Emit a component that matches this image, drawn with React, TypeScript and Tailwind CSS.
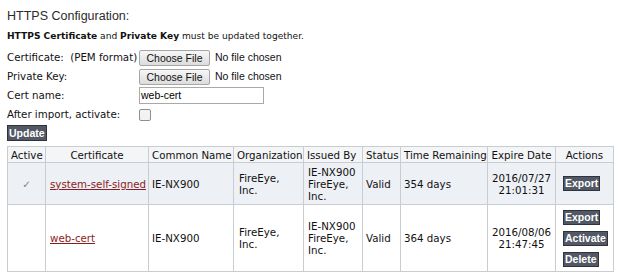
import React from "react";

const body = { fontFamily: '"DejaVu Sans", Verdana, sans-serif' };
const arial = { fontFamily: '"Liberation Sans", Arial, sans-serif' };

function DarkBtn({ children }: { children: React.ReactNode }) {
  return (
    <button
      type="button"
      style={arial}
      className="h-[15px] px-[1px] bg-[#525866] border border-[#2f333b] text-white font-bold text-[10.5px] leading-[13px] cursor-pointer"
    >
      {children}
    </button>
  );
}

function FileBtn() {
  return (
    <div className="flex items-center">
      <div
        style={arial}
        className="w-[71px] h-[16px] rounded-[2px] border border-[#a6a6a6] bg-gradient-to-b from-[#f7f7f7] to-[#dcdcdc] text-[10.5px] leading-[14px] text-[#111] flex items-center justify-center"
      >
        Choose File
      </div>
      <span style={arial} className="ml-[5px] text-[10.5px] text-[#111]">
        No file chosen
      </span>
    </div>
  );
}

export default function App() {
  const th = "border border-[#c9cdd2] font-normal text-[#111] px-[3px] h-[16px] leading-[12px] whitespace-nowrap";
  const td = "border border-[#c9cdd2] text-[#111] leading-[12px] align-middle";
  return (
    <div className="w-[620px] h-[278px] bg-white pt-[8px] px-[7px] overflow-hidden text-[#111]" style={body}>
      <div style={arial} className="h-[17px] text-[12.5px] leading-[17px] text-[#2b2b2b]">
        HTTPS Configuration:
      </div>
      <div className="mt-[4px] h-[14px] text-[9.1px] leading-[14px]">
        <b>HTTPS Certificate</b> and <b>Private Key</b> must be updated together.
      </div>
      <div className="mt-[5px] flex flex-col text-[10.25px]">
        <div className="h-[19px] flex items-center">
          <div className="w-[132px] whitespace-pre">Certificate:  (PEM format)</div>
          <FileBtn />
        </div>
        <div className="h-[19px] flex items-center">
          <div className="w-[132px]">Private Key:</div>
          <FileBtn />
        </div>
        <div className="h-[19px] flex items-center">
          <div className="w-[132px]">Cert name:</div>
          <div
            style={arial}
            className="w-[125px] h-[17px] border border-[#a9a9a9] bg-white text-[10.5px] leading-[15px] pl-[1px] text-black"
          >
            web-cert
          </div>
        </div>
        <div className="h-[19px] flex items-center">
          <div className="w-[132px]">After import, activate:</div>
          <div className="w-[12px] h-[12px] rounded-[2px] border border-[#8f8f8f] bg-[#f3f3f3]" />
        </div>
      </div>
      <div className="mt-[1px] h-[16px] flex">
        <button
          type="button"
          style={arial}
          className="h-[16px] px-[1px] bg-[#525866] border border-[#2f333b] text-white font-bold text-[10.5px] leading-[14px]"
        >
          Update
        </button>
      </div>
      <table className="mt-[5px] w-[606px] table-fixed border-collapse text-[10.25px]">
        <colgroup>
          <col className="w-[38px]" />
          <col className="w-[103px]" />
          <col className="w-[85px]" />
          <col className="w-[70px]" />
          <col className="w-[59px]" />
          <col className="w-[38px]" />
          <col className="w-[87px]" />
          <col className="w-[68px]" />
          <col className="w-[58px]" />
        </colgroup>
        <thead>
          <tr className="bg-[#f4f5f7]">
            <th className={th + " text-center"}>Active</th>
            <th className={th + " text-center"}>Certificate</th>
            <th className={th + " text-left"}>Common Name</th>
            <th className={th + " text-left"}>Organization</th>
            <th className={th + " text-left"}>Issued By</th>
            <th className={th + " text-left"}>Status</th>
            <th className={th + " text-left"}>Time Remaining</th>
            <th className={th + " text-center"}>Expire Date</th>
            <th className={th + " text-center"}>Actions</th>
          </tr>
        </thead>
        <tbody>
          <tr className="bg-[#edf0f5] h-[42px]">
            <td className={td + " text-center text-[#888]"}>✓</td>
            <td className={td + " px-[4px]"}>
              <a href="#" className="text-[#8a1c1c] underline whitespace-nowrap">system-self-signed</a>
            </td>
            <td className={td + " px-[3px]"}>IE-NX900</td>
            <td className={td + " px-[5px]"}>FireEye,<br />Inc.</td>
            <td className={td + " px-[4px]"}>IE-NX900<br />FireEye,<br />Inc.</td>
            <td className={td + " px-[3px]"}>Valid</td>
            <td className={td + " px-[3px]"}>354 days</td>
            <td className={td + " text-center"}>2016/07/27<br />21:01:31</td>
            <td className={td + " pl-[7px]"}>
              <DarkBtn>Export</DarkBtn>
            </td>
          </tr>
          <tr className="bg-white h-[67px]">
            <td className={td}></td>
            <td className={td + " px-[4px]"}>
              <a href="#" className="text-[#8a1c1c] underline">web-cert</a>
            </td>
            <td className={td + " px-[3px]"}>IE-NX900</td>
            <td className={td + " px-[5px]"}>FireEye,<br />Inc.</td>
            <td className={td + " px-[4px]"}>IE-NX900<br />FireEye,<br />Inc.</td>
            <td className={td + " px-[3px]"}>Valid</td>
            <td className={td + " px-[3px]"}>364 days</td>
            <td className={td + " text-center"}>2016/08/06<br />21:47:45</td>
            <td className={td + " pl-[7px]"}>
              <div className="flex flex-col items-start gap-[6px]">
                <DarkBtn>Export</DarkBtn>
                <DarkBtn>Activate</DarkBtn>
                <DarkBtn>Delete</DarkBtn>
              </div>
            </td>
          </tr>
        </tbody>
      </table>
    </div>
  );
}
